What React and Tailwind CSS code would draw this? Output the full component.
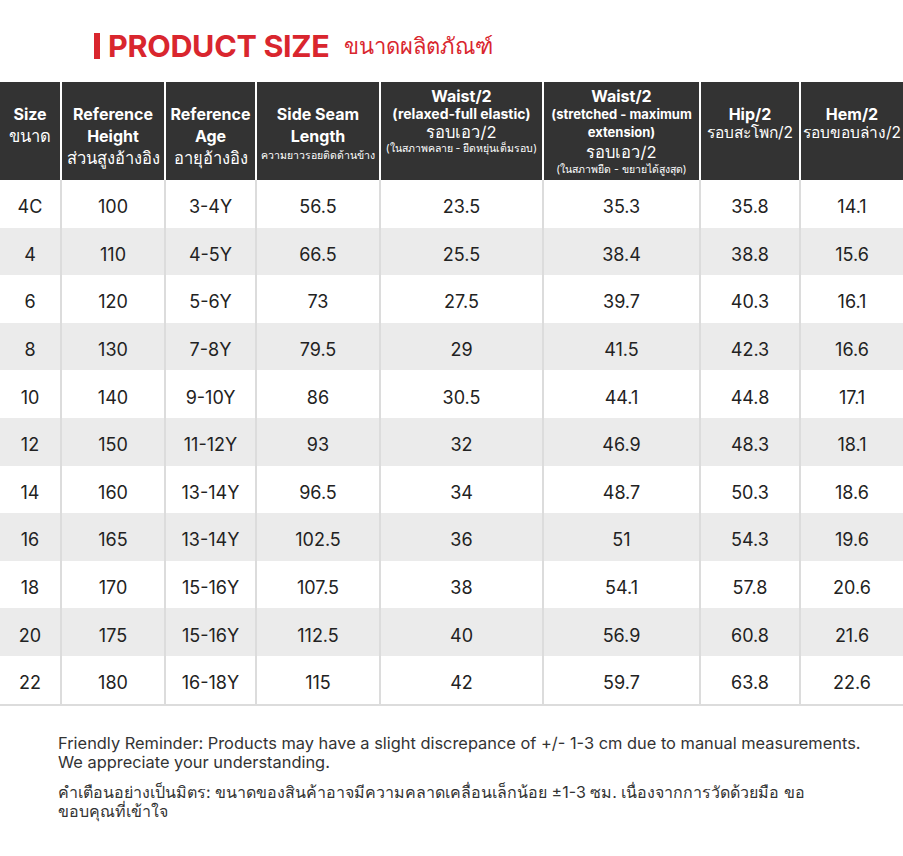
import React from "react";

const rows = [
  ["4C", "100", "3-4Y", "56.5", "23.5", "35.3", "35.8", "14.1"],
  ["4", "110", "4-5Y", "66.5", "25.5", "38.4", "38.8", "15.6"],
  ["6", "120", "5-6Y", "73", "27.5", "39.7", "40.3", "16.1"],
  ["8", "130", "7-8Y", "79.5", "29", "41.5", "42.3", "16.6"],
  ["10", "140", "9-10Y", "86", "30.5", "44.1", "44.8", "17.1"],
  ["12", "150", "11-12Y", "93", "32", "46.9", "48.3", "18.1"],
  ["14", "160", "13-14Y", "96.5", "34", "48.7", "50.3", "18.6"],
  ["16", "165", "13-14Y", "102.5", "36", "51", "54.3", "19.6"],
  ["18", "170", "15-16Y", "107.5", "38", "54.1", "57.8", "20.6"],
  ["20", "175", "15-16Y", "112.5", "40", "56.9", "60.8", "21.6"],
  ["22", "180", "16-18Y", "115", "42", "59.7", "63.8", "22.6"],
];

const cols = "grid grid-cols-[60px_102px_89px_122px_161px_155px_98px_1fr] gap-x-[2px]";

// pt-[21px]: first line of most header cells sits at the same height
const HeadCell = ({ top = "pt-[21px]", children }) => (
  <div className={`bg-[#333333] text-white flex flex-col items-center text-center whitespace-nowrap ${top}`}>
    {children}
  </div>
);

const En = ({ children }) => <div className="font-bold text-[16px] leading-[22px]">{children}</div>;
const Th = ({ lh = "leading-[22px]", children }) => <div className={`text-[16.5px] ${lh}`}>{children}</div>;
const Tiny = ({ lh = "leading-[14px]", children }) => <div className={`text-[10.5px] ${lh}`}>{children}</div>;

export default function App() {
  return (
    <div className="w-[903px] bg-white font-['Inter','Noto_Sans',sans-serif] text-[#222]">
      <div className="h-[82px] flex items-center pl-[94px] pt-[10px]">
        <div className="w-[6px] h-[26px] bg-[#d9262e]" />
        <div className="ml-[8px] text-[30.5px] font-bold text-[#d9262e] tracking-[-0.3px]">PRODUCT SIZE</div>
        <div className="ml-[14px] text-[22px] text-[#d9262e]">ขนาดผลิตภัณฑ์</div>
      </div>

      <div className={`${cols} bg-white h-[98px]`}>
        <HeadCell>
          <En>Size</En>
          <Th>ขนาด</Th>
        </HeadCell>
        <HeadCell>
          <En>Reference</En>
          <En>Height</En>
          <Th>ส่วนสูงอ้างอิง</Th>
        </HeadCell>
        <HeadCell>
          <En>Reference</En>
          <En>Age</En>
          <Th>อายุอ้างอิง</Th>
        </HeadCell>
        <HeadCell>
          <En>Side Seam</En>
          <En>Length</En>
          <Tiny lh="leading-[18px]">ความยาวรอยติดด้านข้าง</Tiny>
        </HeadCell>
        <HeadCell top="pt-[5px]">
          <div className="font-bold text-[16px] leading-[18px]">Waist/2</div>
          <div className="font-bold text-[14px] leading-[18px]">(relaxed-full elastic)</div>
          <Th lh="leading-[19px]">รอบเอว/2</Th>
          <Tiny>(ในสภาพคลาย - ยืดหยุ่นเต็มรอบ)</Tiny>
        </HeadCell>
        <HeadCell top="pt-[5px]">
          <div className="font-bold text-[16px] leading-[18px]">Waist/2</div>
          <div className="font-bold text-[13px] leading-[18px]">(stretched - maximum</div>
          <div className="font-bold text-[13px] leading-[18px]">extension)</div>
          <Th>รอบเอว/2</Th>
          <Tiny>(ในสภาพยืด - ขยายได้สูงสุด)</Tiny>
        </HeadCell>
        <HeadCell>
          <En>Hip/2</En>
          <div className="text-[15.5px] leading-[16px]">รอบสะโพก/2</div>
        </HeadCell>
        <HeadCell>
          <En>Hem/2</En>
          <div className="text-[15.5px] leading-[16px]">รอบขอบล่าง/2</div>
        </HeadCell>
      </div>

      <div className="border-b-2 border-[#dcdcdc]">
        {rows.map((r, i) => (
          <div key={i} className={`${cols} bg-[#dcdcdc] h-[47.6px]`}>
            {r.map((v, j) => (
              <div
                key={j}
                className={`${i % 2 ? "bg-[#ebebeb]" : "bg-white"} flex items-center justify-center pt-[6px] text-[18px]`}
              >
                {v}
              </div>
            ))}
          </div>
        ))}
      </div>

      <div className="pl-[58px] pt-[28px] pb-[30px] text-[16px] leading-[19px] text-[#333]">
        <p className="text-[16.4px]">
          Friendly Reminder: Products may have a slight discrepance of +/- 1-3 cm due to manual measurements.
          <br />
          We appreciate your understanding.
        </p>
        <p className="mt-[11px]">
          คำเตือนอย่างเป็นมิตร: ขนาดของสินค้าอาจมีความคลาดเคลื่อนเล็กน้อย ±1-3 ซม. เนื่องจากการวัดด้วยมือ ขอ
          <br />
          ขอบคุณที่เข้าใจ
        </p>
      </div>
    </div>
  );
}
